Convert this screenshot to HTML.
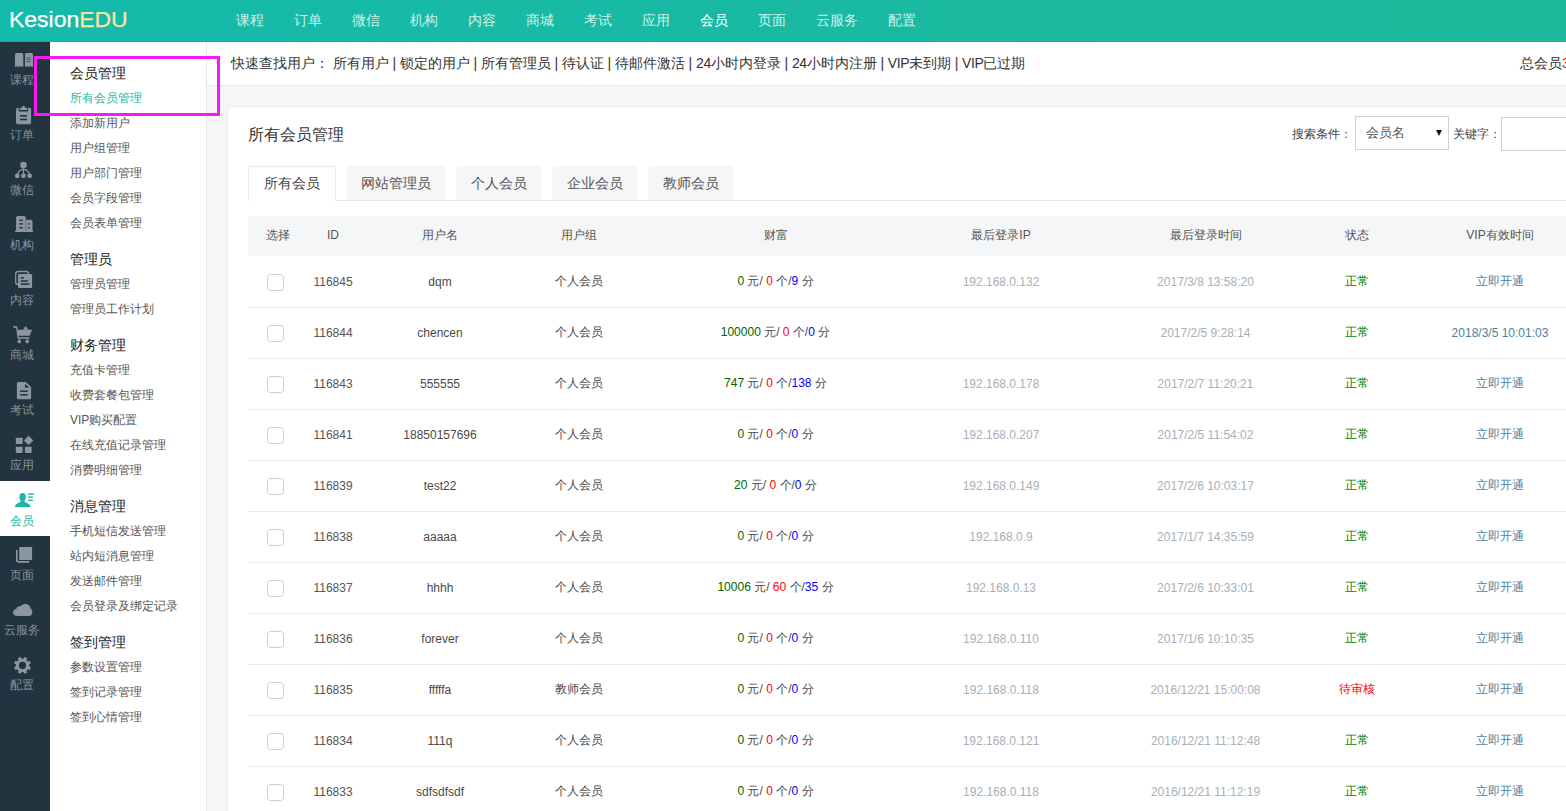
<!DOCTYPE html>
<html lang="zh">
<head>
<meta charset="utf-8">
<title>KesionEDU</title>
<style>
*{box-sizing:border-box;margin:0;padding:0}
html,body{width:1566px;height:811px;overflow:hidden}
body{position:relative;background:#f4f6f7;font-family:"Liberation Sans",sans-serif;font-size:12px;color:#333}
a{text-decoration:none;color:inherit}
ul{list-style:none}
/* top bar */
#top{position:absolute;left:0;top:0;width:1566px;height:42px;background:linear-gradient(to right,#14baab,#1eb99a);box-shadow:inset 0 -1px 0 rgba(0,40,40,.07);z-index:5}
#logo{position:absolute;left:9px;top:0;height:41px;line-height:40px;font-size:21.5px;color:#fff;white-space:nowrap;transform:scaleX(1.068);transform-origin:0 0;-webkit-text-stroke:.25px #fff}
#logo b{font-weight:normal;color:#fbe39a;-webkit-text-stroke:.25px #fbe39a}
#nav{position:absolute;left:221px;top:0;height:41px;white-space:nowrap}
#nav a{float:left;padding:0 15px;line-height:40px;font-size:14px;color:#cdf1ea}
#nav a.on{color:#fff}
/* dark sidebar */
#s1{position:absolute;left:0;top:40px;width:50px;height:771px;background:#22343f;z-index:2}
#s1 .it{position:absolute;left:0;width:50px;height:55px}
#s1 .it span{position:absolute;left:0;top:32px;width:45px;margin-left:-.5px;text-align:center;font-size:12px;line-height:16px;color:#89939b;white-space:nowrap}
#s1 .it.on{background:#fff;top:441px !important;height:55px}
#s1 .it.on span{color:#19b7a6}
/* menu sidebar */
#s2{position:absolute;left:50px;top:42px;width:157px;height:769px;background:#fff;border-right:1px solid #e5e9ec;z-index:1}
#s2 h3{position:absolute;left:20px;font-size:14px;font-weight:normal;color:#222;line-height:20px;white-space:nowrap}
#s2 a{position:absolute;left:20px;font-size:12px;color:#555;line-height:18px;white-space:nowrap}
#s2 a.on{color:#19b7a6}
#hl{position:absolute;left:34px;top:56px;width:186px;height:60px;border:3px solid #f81af3;z-index:9}
/* quick bar */
#quick{position:absolute;left:207px;top:42px;width:1359px;height:44px;background:#fff;border-bottom:1px solid #e8ebed;font-size:14px;line-height:42px;color:#333;white-space:nowrap}
#quick .l{position:absolute;left:24px;top:0}
#quick .r{position:absolute;left:1313px;top:0}
#quick .r i{font-style:normal;color:#f00}
#quick .l i{font-style:normal;word-spacing:-0.21px}
#quick .l em{font-style:normal;letter-spacing:-0.45px}
#quick .l em.d{letter-spacing:-0.3px}
/* panel */
#panel{position:absolute;left:227px;top:106px;width:1400px;height:720px;background:#fff;border:1px solid #e9ecee;border-radius:5px}
#panel h2{position:absolute;left:20px;top:16px;font-size:16px;font-weight:normal;color:#333;line-height:24px}

#search{position:absolute;left:0;top:0;font-size:12px;color:#444;white-space:nowrap}
#search .t1{position:absolute;left:1064px;top:18px;line-height:18px}
#search .sel{position:absolute;left:1127px;top:9px;width:94px;height:34px;border:1px solid #ccd2d8;line-height:32px;padding-left:10px;font-size:13px;color:#555;background:#fff}
#search .sel i{position:absolute;left:80px;top:13px;width:0;height:0;border-left:3.2px solid transparent;border-right:3.2px solid transparent;border-top:6.4px solid #111}
#search .t2{position:absolute;left:1225px;top:18px;line-height:18px}
#search .inp{position:absolute;left:1273px;top:10px;width:200px;height:34px;border:1px solid #ccd2d8;background:#fff}
#tabs{position:absolute;left:20px;top:59px;width:1400px;height:35px;border-bottom:1px solid #e6eaec}
#tabs a{float:left;height:34px;line-height:34px;padding:0 15px;margin-right:10px;font-size:14px;color:#555;background:#f5f6f7;border-radius:4px 4px 0 0}
#tabs a.on{background:#fff;border:1px solid #e6eaec;border-bottom:0;height:35px;line-height:32px;color:#444}
#tb{position:absolute;left:20px;top:109px;border-collapse:separate;border-spacing:0;table-layout:fixed;width:1363px;font-size:12px;color:#4a4a4a}
#tb th{height:40px;padding:0 0 2px;background:#f5f6f7;font-weight:normal;color:#555;text-align:center;font-size:12px}
#tb td{height:51px;border-top:1px solid #e8ecee;text-align:center;white-space:nowrap;padding:0 0 1px}
#tb tbody tr:first-child td{border-top-color:transparent}
#tb td.c{position:relative}
#tb .cb{position:absolute;left:19px;top:17px;width:17px;height:17px;border:1px solid #c9cfd4;border-radius:3.5px;background:#fff}
#tb td.id{color:#555}
#tb b{font-weight:normal}
#tb b.g{color:#006400}#tb b.r{color:#f00}#tb b.b{color:#00f}
#tb td.m{color:#a9afb6}
#tb td.ok{color:#008000}#tb td.no{color:#f00}
#tb td.v{color:#4f7f9f}
</style>
</head>
<body>
<div id="top">
  <div id="logo">Kesion<b>EDU</b></div>
  <div id="nav"><a>课程</a><a>订单</a><a>微信</a><a>机构</a><a>内容</a><a>商城</a><a>考试</a><a>应用</a><a class="on">会员</a><a>页面</a><a>云服务</a><a>配置</a></div>
</div>
<div id="s1">
<div class="it" style="top:0px"><span>课程</span></div>
<div class="it" style="top:55px"><span>订单</span></div>
<div class="it" style="top:110px"><span>微信</span></div>
<div class="it" style="top:165px"><span>机构</span></div>
<div class="it" style="top:220px"><span>内容</span></div>
<div class="it" style="top:275px"><span>商城</span></div>
<div class="it" style="top:330px"><span>考试</span></div>
<div class="it" style="top:385px"><span>应用</span></div>
<div class="it on" style="top:440px"><span>会员</span></div>
<div class="it" style="top:495px"><span>页面</span></div>
<div class="it" style="top:550px"><span>云服务</span></div>
<div class="it" style="top:605px"><span>配置</span></div>
<svg viewBox="0 40 50 771" width="50" height="771" style="position:absolute;left:0;top:0" fill="#8c969e">
<path d="M15,55 C15,53.6 15.9,53 17,53 H21.6 C22.6,53 23.3,53.6 23.3,54.6 V67 C21,66.4 17.5,66.4 15,67 Z"/>
<path d="M25,54.6 C25,53.6 25.7,53 26.7,53 H31 C32.1,53 33,53.6 33,55 V67 C30.5,66.4 27.3,66.4 25,67 Z"/>
<g fill="#22343f" opacity=".55"><rect x="26.4" y="57.2" width="4.2" height="1.1"/><rect x="26.4" y="59.2" width="4.2" height="1.1"/><rect x="26.4" y="61.2" width="4.2" height="1.1"/></g>
<rect x="16" y="107.8" width="15.1" height="16.5" rx="2"/>
<rect x="18.7" y="107" width="9.4" height="4.5" rx="1" fill="#22343f"/>
<path d="M19.8,110 V108.3 Q19.8,107.7 20.4,107.7 H21.9 Q22.3,105.7 23.5,105.7 Q24.7,105.7 25.1,107.7 H26.6 Q27.2,107.7 27.2,108.3 V110 Z"/>
<g fill="#22343f"><rect x="20" y="115.1" width="7" height="1.6"/><rect x="20" y="118.7" width="7" height="1.6"/></g>
<circle cx="23.5" cy="165" r="3.3"/><circle cx="17.3" cy="175.8" r="2.4"/><circle cx="23.5" cy="175.8" r="2.4"/><circle cx="29.7" cy="175.8" r="2.4"/>
<path d="M23.5,166 V175 M23.5,169.3 C20.3,169.3 18.3,171.5 17.4,174.5 M23.5,169.3 C26.7,169.3 28.7,171.5 29.6,174.5" fill="none" stroke="#8c969e" stroke-width="1.3"/>
<path d="M16.1,231.4 V218 Q16.1,216.1 18,216.1 H23.9 Q25.8,216.1 25.8,218 V231.4 Z"/>
<path d="M25.8,219.7 H30.7 Q32.5,219.7 32.5,221.5 V231.4 H25.8 Z"/>
<rect x="15" y="230.7" width="18.1" height="1.3"/>
<rect x="25.7" y="219.7" width=".6" height="11" fill="#22343f" opacity=".35"/>
<g fill="#22343f"><rect x="19.2" y="219.6" width="3.6" height="1.4"/><rect x="19.2" y="223.2" width="3.6" height="1.4"/><rect x="19.2" y="227.1" width="3.6" height="1.4"/><rect x="28" y="223.2" width="1.7" height="1.4"/><rect x="28" y="227.1" width="1.7" height="1.4"/></g>
<rect x="15.7" y="271.5" width="13" height="13" rx="2.6" fill="none" stroke="#8c969e" stroke-width="1.3"/>
<rect x="18" y="273.9" width="14.1" height="14" rx="1"/>
<g fill="#22343f"><rect x="20.8" y="277.2" width="3.1" height="1.5"/><rect x="20.8" y="280.3" width="7" height="1.5"/><rect x="20.8" y="283.3" width="8.6" height="1.5"/></g>
<rect x="13.4" y="326.1" width="1.8" height="1.8"/>
<path d="M14.5,327 H16.6 L18.2,338 H29.4" fill="none" stroke="#8c969e" stroke-width="1.3"/>
<polygon points="16.9,329.7 32,329.7 29.7,335.8 17.8,335.8"/>
<polygon points="25.6,326.1 28.4,329.7 22.8,329.7"/>
<rect x="18.8" y="338" width="1" height="3"/><rect x="26.7" y="338" width="1" height="3"/><circle cx="19.3" cy="341.6" r="1.8"/><circle cx="27.2" cy="341.6" r="1.8"/>
<path d="M18.4,381.9 H25.8 L31.1,386.9 V397.7 Q31.1,399.2 29.6,399.2 H18.4 Q16.9,399.2 16.9,397.7 V383.4 Q16.9,381.9 18.4,381.9 Z"/>
<polygon points="25,383.7 25,387.8 29.3,387.8" fill="#22343f"/>
<g fill="#22343f"><rect x="20" y="390.4" width="7.8" height="1.5"/><rect x="20" y="394" width="7.8" height="1.5"/></g>
<rect x="15.8" y="437.8" width="6.9" height="6.2" rx=".8"/><rect x="15.8" y="446.7" width="6.9" height="6.2" rx=".8"/><rect x="24.9" y="446.7" width="6.8" height="6.2" rx=".8"/>
<polygon points="28.6,435.7 33.3,440.4 28.6,445.1 23.9,440.4"/>
<g fill="#19b7a6"><ellipse cx="22.6" cy="497" rx="3.25" ry="4.1"/>
<path d="M14.9,507 C14.9,504.2 17,503.4 19.5,502.4 C20.8,501.8 21,501 20.9,499.5 H24.3 C24.2,501 24.4,501.8 25.7,502.4 C28.2,503.4 30.6,504.2 30.6,507 Z"/>
<rect x="28.1" y="493.3" width="5.8" height="1.4"/><rect x="28.1" y="496.4" width="4.8" height="1.4"/><rect x="28.1" y="499.6" width="4.8" height="1.4"/></g>
<rect x="19.2" y="546.9" width="12.9" height="13" rx=".8"/>
<path d="M16.8,550 V560 Q16.8,561.9 18.7,561.9 H29.2" fill="none" stroke="#8c969e" stroke-width="1.6"/>
<path d="M17,616.1 C14.8,616.1 13,614.5 13,612.5 C13,610.6 14.4,609.2 16.2,609 C16.8,606.9 18.6,605.8 20.4,606.3 C21.3,604.8 23.1,603.9 25.3,603.9 C28.5,603.9 30.8,606.2 30.9,609.1 C32,609.8 32.3,611 32.3,612.5 C32.3,614.5 30.6,616.1 28.6,616.1 Z"/>
<path fill-rule="evenodd" d="M23.42,658.86 L24.43,657.02 L27.06,658.11 L26.47,660.13 L27.77,661.43 L29.79,660.84 L30.88,663.47 L29.04,664.48 L29.04,666.32 L30.88,667.33 L29.79,669.96 L27.77,669.37 L26.47,670.67 L27.06,672.69 L24.43,673.78 L23.42,671.94 L21.58,671.94 L20.57,673.78 L17.94,672.69 L18.53,670.67 L17.23,669.37 L15.21,669.96 L14.12,667.33 L15.96,666.32 L15.96,664.48 L14.12,663.47 L15.21,660.84 L17.23,661.43 L18.53,660.13 L17.94,658.11 L20.57,657.02 L21.58,658.86 Z M18.90,665.40 a3.60,3.60 0 1,0 7.20,0 a3.60,3.60 0 1,0 -7.20,0 Z"/>
</svg>
</div>
<div id="s2">
<h3 style="top:21px">会员管理</h3>
<a class="on" style="top:47px">所有会员管理</a>
<a style="top:72px">添加新用户</a>
<a style="top:97px">用户组管理</a>
<a style="top:122px">用户部门管理</a>
<a style="top:147px">会员字段管理</a>
<a style="top:172px">会员表单管理</a>
<h3 style="top:207px">管理员</h3>
<a style="top:233px">管理员管理</a>
<a style="top:258px">管理员工作计划</a>
<h3 style="top:293px">财务管理</h3>
<a style="top:319px">充值卡管理</a>
<a style="top:344px">收费套餐包管理</a>
<a style="top:369px">VIP购买配置</a>
<a style="top:394px">在线充值记录管理</a>
<a style="top:419px">消费明细管理</a>
<h3 style="top:454px">消息管理</h3>
<a style="top:480px">手机短信发送管理</a>
<a style="top:505px">站内短消息管理</a>
<a style="top:530px">发送邮件管理</a>
<a style="top:555px">会员登录及绑定记录</a>
<h3 style="top:590px">签到管理</h3>
<a style="top:616px">参数设置管理</a>
<a style="top:641px">签到记录管理</a>
<a style="top:666px">签到心情管理</a>
</div>
<div id="hl"></div>
<div id="quick">
  <div class="l">快速查找用户： <a>所有用户</a><i> | </i><a>锁定的用户</a><i> | </i><a>所有管理员</a><i> | </i><a>待认证</a><i> | </i><a>待邮件激活</a><i> | </i><a><em class="d">24</em>小时内登录</a><i> | </i><a><em class="d">24</em>小时内注册</a><i> | </i><a><em>VIP</em>未到期</a><i> | </i><a><em>VIP</em>已过期</a></div>
  <div class="r">总会员<i>3</i></div>
</div>
<div id="panel">
  <h2>所有会员管理</h2>
<div id="search"><span class="t1">搜索条件：</span><div class="sel">会员名<i></i></div><span class="t2">关键字：</span><div class="inp"></div></div>
<div id="tabs"><a class="on">所有会员</a><a>网站管理员</a><a>个人会员</a><a>企业会员</a><a>教师会员</a></div>
<table id="tb"><colgroup><col style="width:60px"><col style="width:50px"><col style="width:164px"><col style="width:113px"><col style="width:281px"><col style="width:170px"><col style="width:239px"><col style="width:64px"><col style="width:222px"></colgroup>
<thead><tr><th>选择</th><th>ID</th><th>用户名</th><th>用户组</th><th>财富</th><th>最后登录IP</th><th>最后登录时间</th><th>状态</th><th>VIP有效时间</th></tr></thead><tbody>
<tr><td class="c"><span class="cb"></span></td><td class="id">116845</td><td>dqm</td><td>个人会员</td><td><b class="g">0</b> 元/ <b class="r">0</b> 个/<b class="b">9</b> 分</td><td class="m">192.168.0.132</td><td class="m">2017/3/8 13:58:20</td><td class="ok">正常</td><td class="v">立即开通</td></tr>
<tr><td class="c"><span class="cb"></span></td><td class="id">116844</td><td>chencen</td><td>个人会员</td><td><b class="g">100000</b> 元/ <b class="r">0</b> 个/<b class="b">0</b> 分</td><td class="m"></td><td class="m">2017/2/5 9:28:14</td><td class="ok">正常</td><td class="v">2018/3/5 10:01:03</td></tr>
<tr><td class="c"><span class="cb"></span></td><td class="id">116843</td><td>555555</td><td>个人会员</td><td><b class="g">747</b> 元/ <b class="r">0</b> 个/<b class="b">138</b> 分</td><td class="m">192.168.0.178</td><td class="m">2017/2/7 11:20:21</td><td class="ok">正常</td><td class="v">立即开通</td></tr>
<tr><td class="c"><span class="cb"></span></td><td class="id">116841</td><td>18850157696</td><td>个人会员</td><td><b class="g">0</b> 元/ <b class="r">0</b> 个/<b class="b">0</b> 分</td><td class="m">192.168.0.207</td><td class="m">2017/2/5 11:54:02</td><td class="ok">正常</td><td class="v">立即开通</td></tr>
<tr><td class="c"><span class="cb"></span></td><td class="id">116839</td><td>test22</td><td>个人会员</td><td><b class="g">20</b> 元/ <b class="r">0</b> 个/<b class="b">0</b> 分</td><td class="m">192.168.0.149</td><td class="m">2017/2/6 10:03:17</td><td class="ok">正常</td><td class="v">立即开通</td></tr>
<tr><td class="c"><span class="cb"></span></td><td class="id">116838</td><td>aaaaa</td><td>个人会员</td><td><b class="g">0</b> 元/ <b class="r">0</b> 个/<b class="b">0</b> 分</td><td class="m">192.168.0.9</td><td class="m">2017/1/7 14:35:59</td><td class="ok">正常</td><td class="v">立即开通</td></tr>
<tr><td class="c"><span class="cb"></span></td><td class="id">116837</td><td>hhhh</td><td>个人会员</td><td><b class="g">10006</b> 元/ <b class="r">60</b> 个/<b class="b">35</b> 分</td><td class="m">192.168.0.13</td><td class="m">2017/2/6 10:33:01</td><td class="ok">正常</td><td class="v">立即开通</td></tr>
<tr><td class="c"><span class="cb"></span></td><td class="id">116836</td><td>forever</td><td>个人会员</td><td><b class="g">0</b> 元/ <b class="r">0</b> 个/<b class="b">0</b> 分</td><td class="m">192.168.0.110</td><td class="m">2017/1/6 10:10:35</td><td class="ok">正常</td><td class="v">立即开通</td></tr>
<tr><td class="c"><span class="cb"></span></td><td class="id">116835</td><td>fffffa</td><td>教师会员</td><td><b class="g">0</b> 元/ <b class="r">0</b> 个/<b class="b">0</b> 分</td><td class="m">192.168.0.118</td><td class="m">2016/12/21 15:00:08</td><td class="no">待审核</td><td class="v">立即开通</td></tr>
<tr><td class="c"><span class="cb"></span></td><td class="id">116834</td><td>111q</td><td>个人会员</td><td><b class="g">0</b> 元/ <b class="r">0</b> 个/<b class="b">0</b> 分</td><td class="m">192.168.0.121</td><td class="m">2016/12/21 11:12:48</td><td class="ok">正常</td><td class="v">立即开通</td></tr>
<tr><td class="c"><span class="cb"></span></td><td class="id">116833</td><td>sdfsdfsdf</td><td>个人会员</td><td><b class="g">0</b> 元/ <b class="r">0</b> 个/<b class="b">0</b> 分</td><td class="m">192.168.0.118</td><td class="m">2016/12/21 11:12:19</td><td class="ok">正常</td><td class="v">立即开通</td></tr>
<tr><td class="c"><span class="cb"></span></td><td class="id">116832</td><td>kesion</td><td>个人会员</td><td><b class="g">0</b> 元/ <b class="r">0</b> 个/<b class="b">0</b> 分</td><td class="m">192.168.0.118</td><td class="m">2016/12/21 11:10:02</td><td class="ok">正常</td><td class="v">立即开通</td></tr>
</tbody></table>
</div>
</body>
</html>
